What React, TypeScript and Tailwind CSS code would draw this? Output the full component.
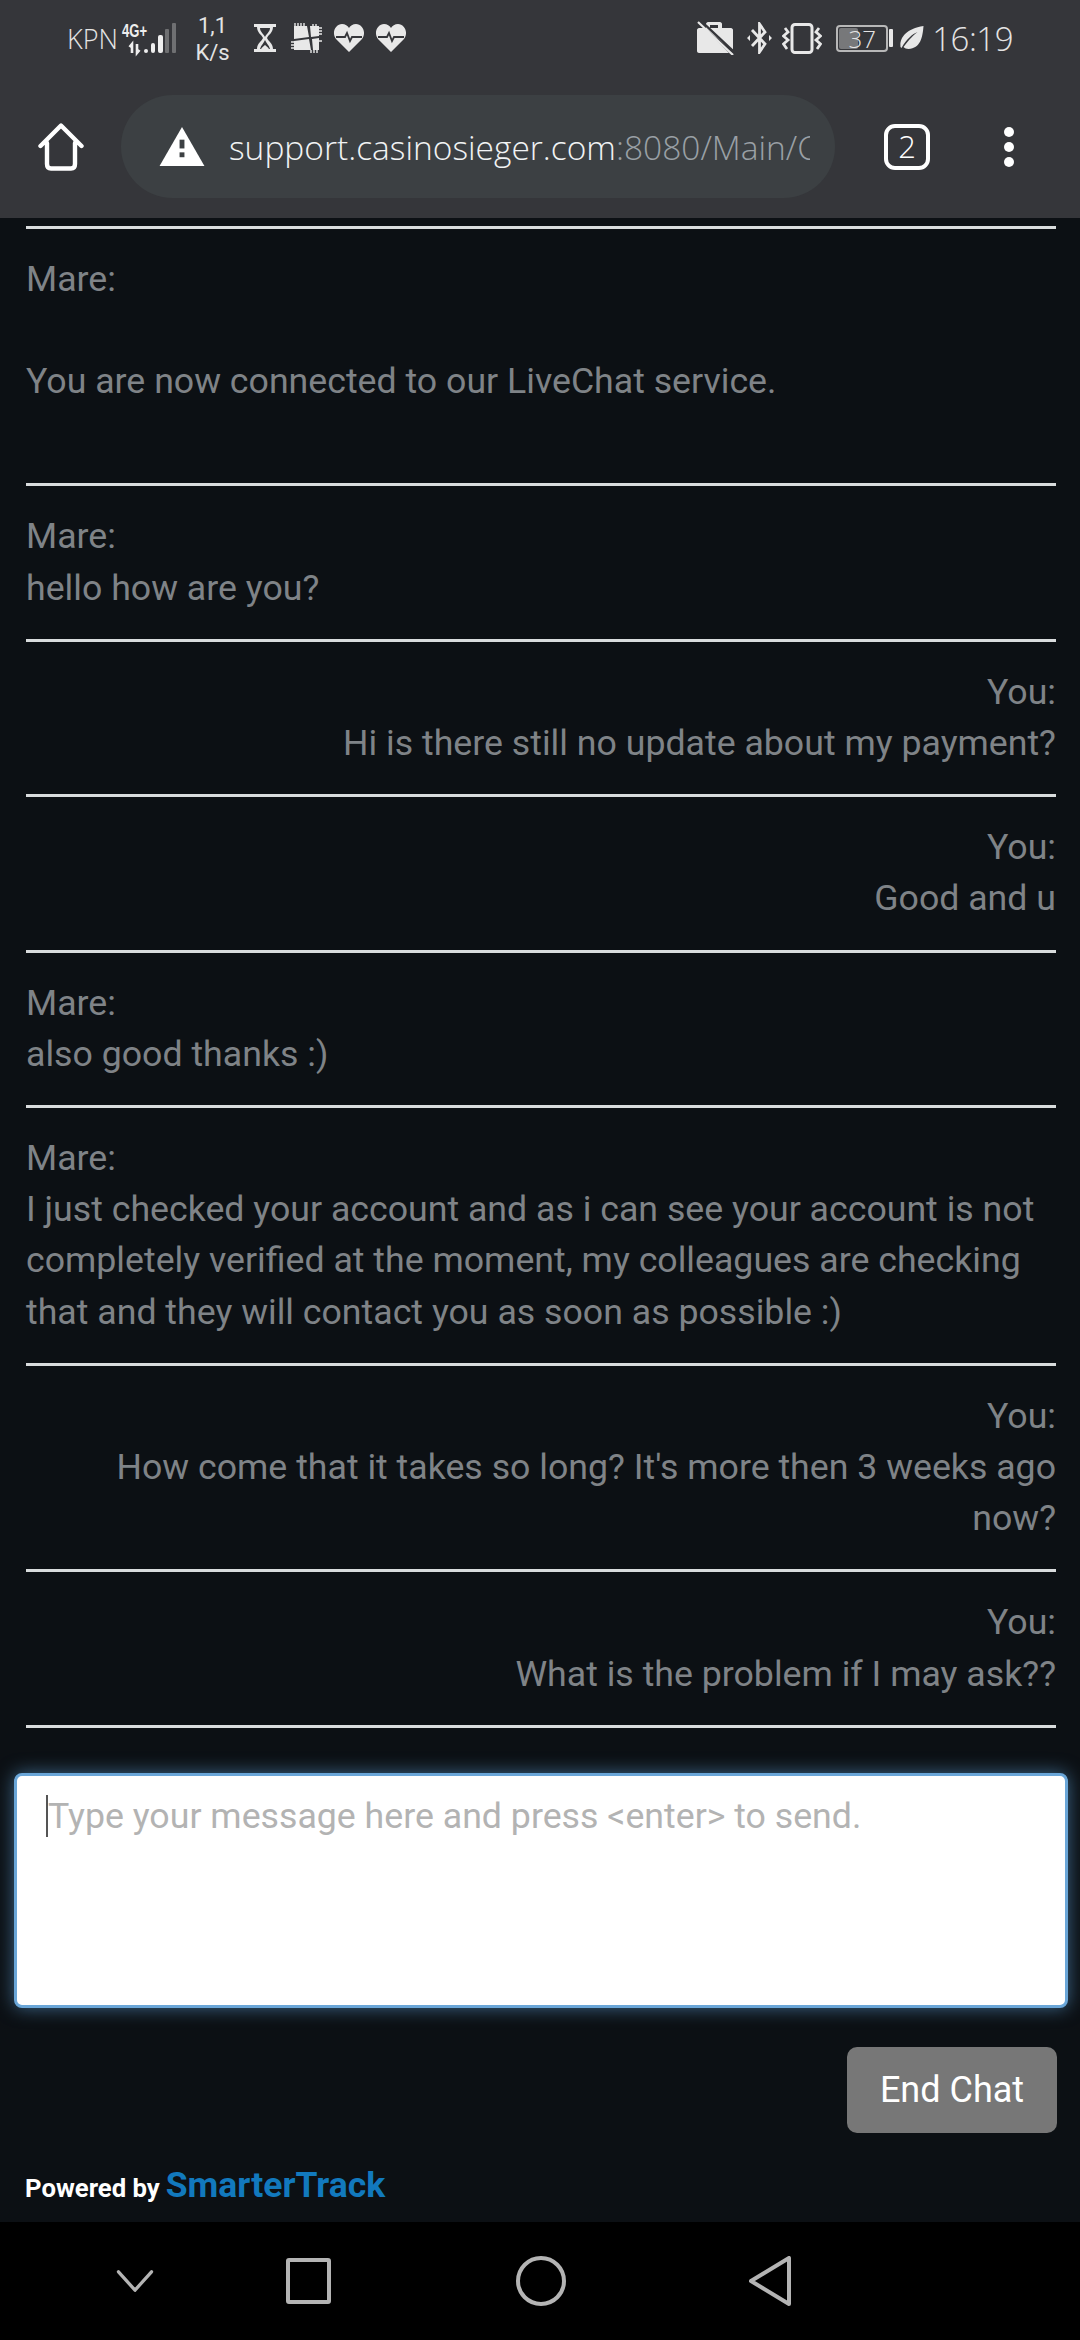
import React from 'react';

const rows: { who: string; lines: string[]; right?: boolean; tall?: boolean }[] = [
    { who: 'Mare:', lines: ['You are now connected to our LiveChat service.'], tall: true },
    { who: 'Mare:', lines: ['hello how are you?'] },
    { who: 'You:', lines: ['Hi is there still no update about my payment?'], right: true },
    { who: 'You:', lines: ['Good and u'], right: true },
    { who: 'Mare:', lines: ['also good thanks :)'] },
    {
        who: 'Mare:',
        lines: [
            'I just checked your account and as i can see your account is not',
            'completely verified at the moment, my colleagues are checking',
            'that and they will contact you as soon as possible :)',
        ],
    },
    { who: 'You:', lines: ["How come that it takes so long? It's more then 3 weeks ago", 'now?'], right: true },
    { who: 'You:', lines: ['What is the problem if I may ask??'], right: true },
];

const Heart: React.FC<{ className?: string }> = ({ className }) => (
    <svg viewBox="0 0 32 30" className={className}>
        <path d="M16 29 L3 16 C-2 9 3 1 9 1 C12 1 15 3 16 5 C17 3 20 1 23 1 C29 1 34 9 29 16 Z" fill="#e8e8e8" />
        <path d="M3 14 H12 L14 10 L17 18 L19 14 H29" fill="none" stroke="#35363a" strokeWidth="1.8" />
    </svg>
);

const StatusBar: React.FC = () => (
    <div className="h-[76px] flex items-center text-[#e4e4e4] font-['Open_Sans',sans-serif] font-light">
        <span className="ml-[67px] w-[53px] text-[27px] leading-none">KPN</span>
        <svg viewBox="0 0 56 30" className="w-[56px] h-[30px] -mt-[1px] overflow-visible">
            <text x="2" y="14" fontFamily="Liberation Sans" fontWeight="700" fontSize="18" fill="#eee" textLength="25" lengthAdjust="spacingAndGlyphs">4G+</text>
            <path d="M12 30 V21 L9.5 24 M17 21 V30 L19.5 27" stroke="#eee" strokeWidth="2.6" fill="none" />
            <rect x="24" y="26" width="4" height="4" rx="2" fill="#eee" />
            <rect x="31" y="20" width="4" height="10" rx="2" fill="#eee" />
            <rect x="38" y="12" width="5" height="18" rx="2" fill="#eee" />
            <rect x="45" y="6" width="4" height="24" rx="1" fill="#6f7072" />
            <rect x="52" y="0" width="4" height="30" rx="1" fill="#6f7072" />
        </svg>
        <div className="ml-[18px] w-[37px] flex flex-col items-center text-[22px] leading-[27px] font-normal font-['Roboto',sans-serif] mt-[1px]">
            <span>1,1</span>
            <span>K/s</span>
        </div>
        <svg viewBox="0 0 24 30" className="ml-[22px] w-[24px] h-[30px]">
            <path d="M1 1 H23 V4 H20 C20 10 15 12 14 15 C15 18 20 20 20 26 H23 V29 H1 V26 H4 C4 20 9 18 10 15 C9 12 4 10 4 4 H1 Z" fill="#e8e8e8" />
            <path d="M7 5 C7 9 11 11 12 14 C13 11 17 9 17 5 Z M7 26 C8 22 11 20 12 17 C13 20 16 22 17 26 Z" fill="#35363a" />
            <path d="M8 26 C9 24 11 23 12 22 C13 23 15 24 16 26 Z" fill="#e8e8e8" />
        </svg>
        <svg viewBox="0 0 31 30" className="ml-[14px] w-[31px] h-[30px]">
            <path d="M3 3 H16 L18 14 L3 16 Z M19 3 H28 V13 L20 14 Z M3 18 L18 16 L20 27 H3 Z M21 16 L28 15 V27 H22 Z" fill="#e8e8e8" />
            <path d="M4 3 V0 M7 3 V0 M10 3 V0 M13 3 V0 M22 3 V1 M25 3 V1 M0 19 H3 M0 22 H3 M0 25 H3 M28 5 H31 M28 8 H31 M28 11 H31 M28 18 H31 M23 27 V30 M26 27 V30 M20 27 V30" stroke="#e8e8e8" strokeWidth="1.4" />
        </svg>
        <Heart className="ml-[11px] w-[32px] h-[30px]" />
        <Heart className="ml-[10px] w-[32px] h-[30px]" />
        <div className="flex-1" />
        <svg viewBox="0 0 38 34" className="w-[38px] h-[34px]">
            <path d="M1 9 C1 8 2 7 3 7 H10 V3 C10 2 11 1 12 1 H24 C25 1 26 2 26 3 V7 H35 C36 7 37 8 37 9 V30 L9 7 L33 32 H3 C2 32 1 31 1 30 Z M14 4 V7 H22 V4 Z" fill="#e8e8e8" />
            <path d="M2 1 L37 34" stroke="#e8e8e8" strokeWidth="2.2" />
            <path d="M5 0 L38 31" stroke="#35363a" strokeWidth="2.4" />
        </svg>
        <svg viewBox="0 0 25 32" className="ml-[13px] w-[25px] h-[32px]">
            <path d="M5 8 L18 22 L12.5 30 V2 L18 10 L5 24" fill="none" stroke="#e8e8e8" strokeWidth="2.8" />
            <path d="M0 16 L3 13 V19 Z M25 16 L22 13 V19 Z" fill="#e8e8e8" />
        </svg>
        <svg viewBox="0 0 40 31" className="ml-[10px] w-[40px] h-[31px]">
            <rect x="10" y="1.5" width="20" height="28" rx="3" fill="none" stroke="#e8e8e8" strokeWidth="3" />
            <path d="M3 5 L6 9 L1.5 13 L6 17 L1.5 21 L5 26 M37 5 L34 9 L38.5 13 L34 17 L38.5 21 L35 26" fill="none" stroke="#e8e8e8" strokeWidth="2.8" />
        </svg>
        <div className="ml-[14px] relative w-[52px] h-[27px] border-[2px] border-[#b8b8b8] rounded-[4px] flex items-center justify-center">
            <div className="absolute left-[1px] top-[1px] bottom-[1px] w-[19px] bg-[#77787a] rounded-[2px]" />
            <span className="relative text-[24px] leading-[23px] font-light">37</span>
        </div>
        <div className="ml-[1px] w-[4px] h-[18px] bg-[#e8e8e8] rounded-[1px]" />
        <svg viewBox="0 0 23 25" className="ml-[7px] w-[24px] h-[25px]">
            <path d="M23 0 C22 12 20 22 8 23 C6 23 4 22 3 21 C9 13 13 9 17 6 C12 8 6 13 1 22 L0 21 C-1 12 5 3 23 0 Z" fill="#e8e8e8" />
        </svg>
        <span className="ml-[8px] mr-[67px] text-[33px] leading-none tracking-[-0.5px]">16:19</span>
    </div>
);

const ChromeBar: React.FC = () => (
    <div className="h-[142px] pb-[20px] pt-[19px] flex items-center">
        <svg viewBox="0 0 46 48" className="ml-[38px] w-[46px] h-[48px]">
            <path d="M2.5 23 L23 2.5 L43.5 23 M9 20 V41 C9 44 10 45.5 13 45.5 H33 C36 45.5 37 44 37 41 V20" fill="none" stroke="#fff" strokeWidth="4.4" strokeLinecap="round" strokeLinejoin="round" />
        </svg>
        <div className="ml-[37px] w-[714px] h-[103px] rounded-[52px] bg-[#3c4043] flex items-center pl-[38px] pr-[25px]">
            <svg viewBox="0 0 46 40" className="w-[46px] h-[39px] shrink-0">
                <path d="M23 0 L46 40 H0 Z" fill="#fff" />
                <rect x="20.5" y="13" width="5" height="9" fill="#3c4043" />
                <rect x="20.5" y="26" width="5" height="5" fill="#3c4043" />
            </svg>
            <div className="ml-[24px] overflow-hidden whitespace-nowrap text-[33.5px] leading-[46px] font-['Open_Sans',sans-serif] font-light text-[#f1f3f4]">
                support.casinosieger.com<span className="text-[#9aa0a6]">:8080/Main/Chat</span>
            </div>
        </div>
        <div className="ml-[49px] w-[46px] h-[46px] border-[4px] border-white rounded-[11px] flex items-center justify-center text-[31px] leading-none text-white font-['Open_Sans',sans-serif] font-light">
            2
        </div>
        <div className="ml-[74px] flex flex-col gap-[5px]">
            <div className="w-[10px] h-[10px] rounded-full bg-white" />
            <div className="w-[10px] h-[10px] rounded-full bg-white" />
            <div className="w-[10px] h-[10px] rounded-full bg-white" />
        </div>
    </div>
);

const NavBar: React.FC = () => (
    <div className="h-[118px] bg-black flex items-center">
        <svg viewBox="0 0 40 24" className="ml-[116px] w-[38px] h-[22px]">
            <path d="M2 2 L20 22 L38 2" fill="none" stroke="#b4b4b4" strokeWidth="3.6" strokeLinecap="round" strokeLinejoin="round" />
        </svg>
        <div className="ml-[132px] w-[45px] h-[46px] border-[4px] border-[#b4b4b4] rounded-[3px]" />
        <div className="ml-[185px] w-[50px] h-[50px] border-[4px] border-[#b4b4b4] rounded-full" />
        <svg viewBox="0 0 42 50" className="ml-[183px] w-[42px] h-[50px]">
            <path d="M40 2 V48 L2 25 Z" fill="none" stroke="#b4b4b4" strokeWidth="4" strokeLinejoin="round" />
        </svg>
    </div>
);

export default function App() {
    return (
        <div className="w-[1080px] h-[2340px] flex flex-col overflow-hidden bg-[#0c1014] font-['Roboto',sans-serif]">
            <div className="bg-[#35363a]">
                <StatusBar />
                <ChromeBar />
            </div>
            <div className="flex-1 flex flex-col pt-[8px]">
                <div className="ml-[26px] mr-[24px] border-t-[3px] border-[#d9dcdd] text-[35.7px] leading-[51.2px] text-[#7f8387]">
                    {rows.map((row, i) => (
                        <div
                            key={i}
                            className={`border-b-[3px] border-[#d9dcdd] pt-[25px] pb-[25px] ${row.right ? 'text-right' : 'text-left'}`}
                        >
                            <div>{row.who}</div>
                            {row.tall && <div className="h-[51px]" />}
                            {row.lines.map((line, j) => (
                                <div key={j}>{line}</div>
                            ))}
                            {row.tall && <div className="h-[51px]" />}
                        </div>
                    ))}
                </div>
                <div className="ml-[14px] mr-[12px] mt-[45px] h-[235px] bg-white border-[3px] border-[#6aa6d8] rounded-[8px] shadow-[0_0_18px_rgba(102,175,233,0.55)] flex items-start pl-[29px] pt-[19px]">
                    <div className="w-[2px] h-[42px] bg-[#555] shrink-0" />
                    <span className="text-[35.7px] leading-[42px] text-[#b3b3b3]">Type your message here and press &lt;enter&gt; to send.</span>
                </div>
                <div className="flex justify-end mt-[39px] mr-[23px]">
                    <button className="w-[210px] h-[86px] rounded-[10px] bg-[#777777] text-white text-[36px]">End Chat</button>
                </div>
                <div className="mt-[32px] ml-[25px] flex items-baseline gap-[6px] font-bold">
                    <span className="text-[25.7px] leading-[40px] text-white">Powered by</span>
                    <span className="text-[35.5px] leading-[40px] text-[#1279bd]">SmarterTrack</span>
                </div>
            </div>
            <NavBar />
        </div>
    );
}
